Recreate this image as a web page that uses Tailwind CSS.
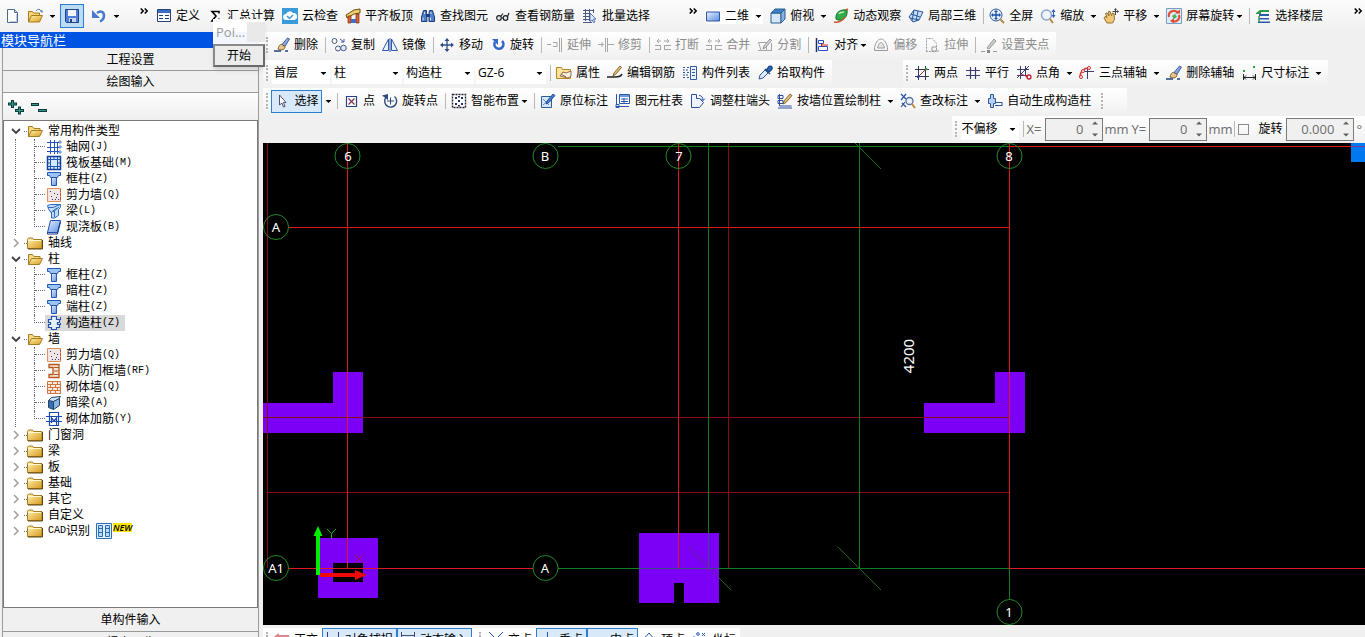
<!DOCTYPE html>
<html lang="zh-CN">
<head>
<meta charset="utf-8">
<title>绘图输入</title>
<script src="https://cdn.jsdelivr.net/npm/@tailwindcss/browser@4"></script>
</head>
<body class="h-screen overflow-hidden bg-[#f0f0f0] font-['Open_Sans','Noto_Sans_CJK_SC',sans-serif] text-xs leading-4 text-black">

<svg class="absolute size-0" aria-hidden="true">
  <defs>
    <linearGradient id="gBlue" x1="0" y1="0" x2="1" y2="1"><stop offset="0" stop-color="#e6f0ff"/><stop offset="1" stop-color="#5b8fe0"/></linearGradient>
    <linearGradient id="gGold" x1="0" y1="0" x2="1" y2="1"><stop offset="0" stop-color="#fff3b0"/><stop offset="1" stop-color="#d99a1c"/></linearGradient>
  </defs>
  <symbol id="ar" viewBox="0 0 12 16"><path d="M6.500 7h6l-3 3z"/></symbol>
  <symbol id="ars" viewBox="0 0 8 16"><path d="M2.500 7h6l-3 3z"/></symbol>
  <symbol id="more" viewBox="0 0 9 6"><path d="M.7.5l2.500 2.500-2.500 2.500M4.700.5l2.500 2.500-2.500 2.500" fill="none" stroke="#000" stroke-width="1.500"/></symbol>
  <symbol id="new" viewBox="0 0 16 16"><path d="M3.500 1.500h7l3 3v10h-10z" fill="#fff" stroke="#4a6a94"/><path d="M10.500 1.500v3h3" fill="#cfe0f5" stroke="#4a6a94"/><path d="M12.500 6v7.500H6" fill="none" stroke="#b5cbe8"/></symbol>
  <symbol id="open" viewBox="0 0 16 16"><path d="M1.500 14V3.500h4l1 1.500h6v3" fill="#f8d778" stroke="#a97a1a"/><path d="M1.500 14l3-6.500h11L12.500 14z" fill="url(#gGold)" stroke="#a97a1a"/><path d="M9 3c2-2.500 4-2 5 0" fill="none" stroke="#3f68b5"/><path d="M12.500 2.500h3V5z" fill="#3f68b5"/></symbol>
  <symbol id="save" viewBox="0 0 16 16"><path d="M1.500 1.500h13v13h-12l-1-1z" fill="#4f7fd6" stroke="#20418c"/><path d="M4 2h8v6H4z" fill="#f2f6ff"/><path d="M5 10h7v4H5z" fill="#c9d5ea"/><path d="M6 11h2v3H6z" fill="#20418c"/></symbol>
  <symbol id="undo" viewBox="0 0 16 16"><path d="M6 5c4-3 7-1 7 2.500 0 3-2 5-4 6" fill="none" stroke="#4a78d0" stroke-width="2.500"/><path d="M1 2v8h8z" fill="#4a78d0"/></symbol>
  <symbol id="define" viewBox="0 0 16 16"><path d="M1.500 1.500h13v12h-13z" fill="#fff" stroke="#25417c"/><path d="M2 2h12v3H2z" fill="#3d6fc9"/><path d="M3 7.500h4M9 7.500h4M3 10.500h4M9 10.500h4" stroke="#25417c"/></symbol>
  <symbol id="sum" viewBox="0 0 16 16"><path d="M12 5.500V3.500H5L9 8l-4 5h7v-2.500" fill="none" stroke="#000" stroke-width="1.600"/></symbol>
  <symbol id="cloud" viewBox="0 0 16 16"><path d="M0 0h16v16H0z" fill="#3b9bd8"/><path d="M4 12a3 3 0 010-6 4 4 0 017-1 3.500 3.500 0 011 7z" fill="#fff"/><path d="M5 8l2.500 2.500L11 7" fill="none" stroke="#3b9bd8" stroke-width="1.500"/></symbol>
  <symbol id="roof" viewBox="0 0 16 16"><path d="M1 7l8-5 6-1v4l-6 1-7 4z" fill="#f0cf6a" stroke="#6b4b12"/><path d="M3 8h3v7H3zM11 6h3v9h-3z" fill="#e0622c" stroke="#7a2a10" stroke-width=".7"/><path d="M6 11h5v4H6z" fill="#3d6fc9"/></symbol>
  <symbol id="bino" viewBox="0 0 16 16"><path d="M3.500 2.500h3v3l.5 8H1.500V9zM9.500 2.500h3l2 6.500v4.500H9V5.500z" fill="#4f7fc8" stroke="#1d3a78"/><path d="M6.500 6h3v3h-3z" fill="#1d3a78"/><path d="M3 9.500v3M10.500 9.500v3M4.500 4v2M11 4v2" stroke="#cfe0ff"/></symbol>
  <symbol id="glass" viewBox="0 0 16 16"><circle cx="4" cy="10" r="2.300" fill="#dfe8f5" stroke="#222" stroke-width="1.200"/><circle cx="10.500" cy="10" r="2.300" fill="#dfe8f5" stroke="#222" stroke-width="1.200"/><path d="M6.500 10h2M6 8l2-2.500M12.500 8.500L14 5" stroke="#222" fill="none" stroke-width="1.200"/></symbol>
  <symbol id="batch" viewBox="0 0 16 16"><path d="M1 2.500h10M1 5.500h8M1 8.500h6M1 11.500h6M3.500 1v12M7.500 1v12M11.500 1v4M1 14.500h9" stroke="#4a5a7a" fill="none"/><path d="M8 5l6 6-2.500.3L13 14l-1.500.6-1.200-2.600L8 13.500z" fill="#dbe8ff" stroke="#3a5fa8" stroke-width=".8"/></symbol>
  <symbol id="rect" viewBox="0 0 16 16"><path d="M1.500 4h13v9h-13z" fill="url(#gBlue)" stroke="#2f55a5"/></symbol>
  <symbol id="cube" viewBox="0 0 16 16"><path d="M1 5h10v10H1z" fill="#d5e6f8" stroke="#2d5c8f"/><path d="M1 5l4-4h10l-4 4z" fill="#3b82c8" stroke="#2d5c8f"/><path d="M11 5l4-4v10l-4 4z" fill="#86b4e0" stroke="#2d5c8f"/></symbol>
  <symbol id="orbit" viewBox="0 0 16 16"><path d="M3 11C2 4 8 1 14 2c1 6-3 11-9 10z" fill="#2faa4a" stroke="#127030"/><path d="M1 14c4 1 9-1 11-5M13 2l2-1" fill="none" stroke="#d0572a" stroke-width="1.500"/><path d="M6 6c1-2 3-2 5-2" stroke="#b8f0a0" fill="none" stroke-width="1.500"/></symbol>
  <symbol id="part3d" viewBox="0 0 16 16"><path d="M1 9l5-7 9 2-4 8-6 2z" fill="#c8dcf5" stroke="#2a5a9c"/><path d="M3 6l9 3M6 2L4 13M10 3L8 13M2 10l9 2" fill="none" stroke="#2a5a9c"/></symbol>
  <symbol id="full" viewBox="0 0 16 16"><circle cx="7" cy="7" r="6" fill="#e3eefc" stroke="#2e5a9e"/><path d="M7 3v8M3 7h8" stroke="#1d4f9f" stroke-width="1.300"/><path d="M7 2l2 2H5zM7 12l2-2H5zM2 7l2-2v4zM12 7l-2-2v4z" fill="#1d4f9f"/><path d="M11.500 11.500l3.500 3.500" stroke="#b98a3a" stroke-width="2"/></symbol>
  <symbol id="zoom" viewBox="0 0 16 16"><circle cx="6.500" cy="7" r="5" fill="#eef5ff" stroke="#8fa8cc" stroke-width="1.500"/><path d="M10 11l3 4" stroke="#b98a3a" stroke-width="2"/><path d="M11.500 4h4l-2-3zM11.500 7h4l-2 3z" fill="#2e5fae"/><path d="M13.500 3v5" stroke="#2e5fae"/></symbol>
  <symbol id="pan" viewBox="0 0 16 16"><path d="M4 15l-3-5 1-1.500 2 1L2.500 5.500 4 4.800 6 8 5.500 3.500 7 3.300 8.500 7.500 9.500 5l1.500.5.500 6-2 3.500z" fill="#efc777" stroke="#8a6420" stroke-width=".9"/><path d="M12.500 1v6M9.500 3.500h6" stroke="#444"/><path d="M12.500 0l1.500 2h-3zM16 3.500L14 2v3z" fill="#444"/></symbol>
  <symbol id="scrrot" viewBox="0 0 16 16"><path d="M.5.5h15v15H.5z" fill="#d9eaf9" stroke="#7a9cc4"/><path d="M3 9a5 5 0 019-4" fill="none" stroke="#e04a2a" stroke-width="2"/><path d="M13 7a5 5 0 01-7 6" fill="none" stroke="#e04a2a" stroke-width="2"/><path d="M9 5.500h5v-4zM8 10v5l-4-2z" fill="#e04a2a"/><path d="M6 8l3-2 2 3-3 2z" fill="#49b060"/></symbol>
  <symbol id="floor" viewBox="0 0 16 16"><path d="M1 5l4-3h9v2H6v2H1z" fill="#2c9a4b"/><path d="M4 6h10v2H4zM4 10h10v1.500H4zM3 13.500h12V15H3z" fill="#2b5aa8"/><path d="M4 8v6" stroke="#2c9a4b" stroke-width="1.500"/></symbol>
  <symbol id="brush" viewBox="0 0 16 16"><path d="M8 7.500L13.500 1l2 1-4.500 7.500z" fill="#8aa6e0" stroke="#2d4688" stroke-width=".8"/><path d="M4 12c1-4 2.500-5 4-4.500l3 2c0 3-3 4.500-7 2.500z" fill="#e8c48a" stroke="#5c4420" stroke-width=".8"/><path d="M0 14h7M11 14h3" stroke="#25417c" stroke-width="1.300"/></symbol>
  <symbol id="copy" viewBox="0 0 16 16"><circle cx="3.500" cy="4" r="2.500" fill="none" stroke="#445a80"/><circle cx="7" cy="11.500" r="2.500" fill="none" stroke="#445a80"/><circle cx="12.500" cy="11" r="2.800" fill="#dde8f8" stroke="#445a80"/><path d="M9 2l4 3M13 2v3h-3" fill="none" stroke="#3a62a8"/></symbol>
  <symbol id="mirror" viewBox="0 0 16 16"><path d="M6.500 2v11.500h-6zM9.500 2v11.500h6z" fill="#eaf2ff" stroke="#2e58a8"/><path d="M8 1v14" stroke="#2e58a8"/></symbol>
  <symbol id="move" viewBox="0 0 16 16"><path d="M8 2v12M2 8h12" stroke="#2f4f86" stroke-width="1.300"/><path d="M8 1l2.500 3h-5zM8 15l2.500-3h-5zM1 8l3-2.500v5zM15 8l-3-2.500v5z" fill="#2f4f86"/></symbol>
  <symbol id="rot" viewBox="0 0 16 16"><path d="M5 5a4.500 4.500 0 107-1" fill="none" stroke="#3468c8" stroke-width="2.600"/><path d="M2 2h6v6z" fill="#3468c8"/></symbol>
  <symbol id="ext" viewBox="0 0 16 16"><path d="M0 7.500h4M6 5.500h4v4H6M12.500 1v14M14.500 1v14" fill="none" stroke="#a6a6a6"/></symbol>
  <symbol id="trim" viewBox="0 0 16 16"><path d="M0 7.500h6M10 7.500h6M7.500 1v14M9.500 1v14M4 5v5" fill="none" stroke="#a6a6a6"/></symbol>
  <symbol id="brk" viewBox="0 0 16 16"><path d="M0 8.500h6M9 8.500h7M0 12.500h6M9 12.500h7M5.500 8v5M9.500 8v5M2 4h4M9 4h4M4 2L2 4l2 2M12 2l2 2-2 2" fill="none" stroke="#a6a6a6"/></symbol>
  <symbol id="split" viewBox="0 0 16 16"><path d="M1 13.500h14M1.500 5.500h8v8M14.500 6v8M1.500 5.500L4 13" fill="none" stroke="#a6a6a6"/><path d="M6 12l1-3 6-7 1.500 1.500-6 7z" fill="#ddd" stroke="#8e8e8e"/></symbol>
  <symbol id="align" viewBox="0 0 16 16"><path d="M2.500 1v14" stroke="#1b2b66" stroke-width="1.500"/><path d="M4.500 3.500h5v3h-5z" fill="#fff" stroke="#2450c0"/><path d="M4.500 9.500h9v4h-9z" fill="#fff" stroke="#2450c0"/><path d="M14 8H7l2-2M7 8l2 2" stroke="#d02020" fill="none"/></symbol>
  <symbol id="off" viewBox="0 0 16 16"><path d="M1.500 13.500v-3C3 4 6 2 8 2s5 2 6.500 8.500v3z" fill="none" stroke="#9a9a9a"/><path d="M4.500 11c1-4 2-5.500 3.500-5.500S10.500 7 11.500 11z" fill="#e4e4e4" stroke="#9a9a9a"/></symbol>
  <symbol id="stretch" viewBox="0 0 16 16"><path d="M2.500 14.500v-13h6l4 5v8z" fill="none" stroke="#9a9a9a" stroke-dasharray="2 1"/><path d="M8 10h5M8 10v4h7" fill="none" stroke="#9a9a9a"/></symbol>
  <symbol id="clip" viewBox="0 0 16 16"><path d="M0 14.500h4M12 14.500h4" stroke="#9a9a9a"/><path d="M6 11l7-9 2 2-7 8z" fill="#ccc" stroke="#999"/><path d="M6 13h3v3H6z" fill="#888"/></symbol>
  <symbol id="prop" viewBox="0 0 16 16"><path d="M.5 13.500v-11h5l1 2h8v9z" fill="#fbe39c" stroke="#b8862a"/><path d="M4 11l3-4 3 1 5-2v5l-3 2z" fill="#f5f0e6" stroke="#8a5a30" stroke-width=".9"/><path d="M5 9l5 3" stroke="#8a5a30"/></symbol>
  <symbol id="editbar" viewBox="0 0 16 16"><path d="M0 12h8c3 0 6 0 7-3" fill="none" stroke="#222" stroke-width="1.600"/><path d="M6 11l1-3 6-7 1.500 1.500-6 7z" fill="#e6c074" stroke="#6b4a1a" stroke-width=".8"/></symbol>
  <symbol id="list" viewBox="0 0 16 16"><path d="M8.500 1.500h6v13h-6z" fill="#eef4ff" stroke="#2e5a9e"/><path d="M10 4.500h3M10 7.500h3M10 10.500h3" stroke="#2e5a9e"/><path d="M1 2.500h2M5 2.500h2M1 7.500h2M5 7.500h2M1 12.500h2M5 12.500h2M1 5h6M1 10h6" stroke="#2e5a9e" stroke-dasharray="2 1"/></symbol>
  <symbol id="pick" viewBox="0 0 16 16"><path d="M2 14l1-4 5-5 3 3-5 5z" fill="#dbeafc" stroke="#2e5a9e"/><path d="M8 4l5 5M9.500 5L12 1.500c2-1 4 1 2.500 3L12 7z" fill="#2d6cb8" stroke="#1c4a88" stroke-width="1.500"/></symbol>
  <symbol id="two" viewBox="0 0 16 16"><path d="M1 4.500h14M1 11.500h14M4.500 1v14M11.500 1v14" stroke="#333a50" fill="none"/><path d="M3 13L13 3" stroke="#b02030"/><circle cx="4.500" cy="11.500" r="1.300" fill="#2450c0"/><circle cx="12" cy="4" r="1.300" fill="#3b9a40"/></symbol>
  <symbol id="para" viewBox="0 0 16 16"><path d="M1 5.500h14M1 10.500h14M5.500 2v12M10.500 2v12" stroke="#3a3f70" stroke-width="1.200" fill="none"/></symbol>
  <symbol id="angle" viewBox="0 0 16 16"><path d="M1 4.500h12M1 10.500h10M4.500 1v13M9.500 1v9M1 13L13 1" stroke="#3a3f70" fill="none"/><path d="M5 9l7 3" stroke="#c02030"/><circle cx="13" cy="12" r="2" fill="none" stroke="#c02030" stroke-width="1.300"/></symbol>
  <symbol id="three" viewBox="0 0 16 16"><path d="M1 12c0-6 4-9 9-9" fill="none" stroke="#d03030" stroke-width="1.300"/><path d="M4 6.500h11M8.500 2v12" stroke="#3a3f70"/><circle cx="2" cy="12" r="1.500" fill="#fff" stroke="#d03030"/><circle cx="4" cy="6" r="1.500" fill="#fff" stroke="#d03030"/><circle cx="10" cy="3" r="1.500" fill="#fff" stroke="#d03030"/></symbol>
  <symbol id="dim" viewBox="0 0 16 16"><path d="M2 5h2v2H2zM12 1h2v2h-2z" fill="#35a040"/><path d="M2.500 9v6M14.500 9v6M3 12.500h11M5 10.500l-2 2 2 2M12 10.500l2 2-2 2" stroke="#222" fill="none"/></symbol>
  <symbol id="ptr" viewBox="0 0 16 16"><path d="M5.500 2v10l2.500-2 1.500 4 1.500-.6L9.500 9.500H12z" fill="#fff" stroke="#3a3f60" stroke-width=".9"/></symbol>
  <symbol id="pt" viewBox="0 0 16 16"><path d="M3.500 3.500h10v10h-10z" fill="#fff" stroke="#25418c" stroke-width="1.200"/><path d="M5.500 5.500l6 6M11.500 5.500l-6 6" stroke="#7a3050" stroke-width="1.200"/></symbol>
  <symbol id="rotpt" viewBox="0 0 16 16"><path d="M3.500 5a6 6 0 109-1.500" fill="none" stroke="#2e4a7e" stroke-width="1.400"/><path d="M0 2.500L6 1v6z" fill="#2e4a7e"/><path d="M8.500 4.500v7M5 8h7" stroke="#2e4a7e"/></symbol>
  <symbol id="smart" viewBox="0 0 16 16"><path d="M1.500 1.500h13v13h-13z" fill="#fff" stroke="#223" stroke-dasharray="2 1" stroke-width="1.400"/><path d="M4 4h2v2H4zM10 4h2v2h-2zM4 10h2v2H4zM10 10h2v2h-2zM7 7h2v2H7zM7 3h2v1.500H7zM7 12h2v1.500H7z" fill="#1f3560"/></symbol>
  <symbol id="orig" viewBox="0 0 16 16"><path d="M1.500 3.500h10v11h-10z" fill="#d7e6fa" stroke="#2e5a9e"/><path d="M3 12l8-7M3 6l6 6" stroke="#5b86c8"/><path d="M6 11l1-3 6-7 2 1.500-6 7z" fill="#3f7fd0" stroke="#1c3f80" stroke-width=".8"/></symbol>
  <symbol id="coltab" viewBox="0 0 16 16"><path d="M4.500 1.500h10v9h-10z" fill="#fff" stroke="#2e58b0"/><path d="M5 2h9v2H5z" fill="#6b97dc"/><path d="M6 6h7M6 8.500h7M9 5v5" stroke="#2e58b0"/><path d="M1.500 1v10M1 13.500h13M1 11.500h3v3H1z" fill="none" stroke="#2e58b0"/></symbol>
  <symbol id="adj" viewBox="0 0 16 16"><path d="M1.500 1.500h5v4h3l4 4-4 5h-8z" fill="#eef4ff" stroke="#2e4fa0"/><path d="M9 2.500c3 0 4 2 4 5M11 5.500l2 2 2-2" fill="none" stroke="#2e4fa0"/></symbol>
  <symbol id="wallcol" viewBox="0 0 16 16"><path d="M1 2.500h5v3H1zM1 7.500h5v3H1zM2.500 1v12h12M1 15h14" fill="none" stroke="#2e4fa0"/><path d="M6 11l1-3 6-7 2 1.500-6 7z" fill="#e6c074" stroke="#6b4a1a" stroke-width=".8"/></symbol>
  <symbol id="chk" viewBox="0 0 16 16"><path d="M1 1l5 5M6 1L1 7M1 14l4-5M2 10l4 4" stroke="#2450a8" stroke-width="1.200"/><circle cx="9.500" cy="8" r="3.500" fill="#e8f2ff" stroke="#55719c" stroke-width="1.300"/><path d="M12 11l3 4" stroke="#c08a3a" stroke-width="2"/></symbol>
  <symbol id="auto" viewBox="0 0 16 16"><path d="M3.500 1.500h3v4h2v5h-2v4h-3v-4h-2v-5h2z" fill="#b9d2f3" stroke="#2e58a0"/><path d="M8 9.500h7M8 12.500h7M15 9v4" stroke="#2e58a0" fill="none"/></symbol>
  <symbol id="fo" viewBox="0 0 16 16"><path d="M1.500 13.500v-10h4l1.500 2h6v2" fill="#f7da80" stroke="#a47c22"/><path d="M1.500 13.500l3-6h11l-3 6z" fill="url(#gGold)" stroke="#a47c22"/></symbol>
  <symbol id="fc" viewBox="0 0 16 16"><path d="M.5 13.500v-9l1-1.500h4l1 1.500h8.500v9z" fill="url(#gGold)" stroke="#a47c22"/><path d="M1 5.500h13" stroke="#fff7cf"/><path d="M1 14h14.500V5" fill="none" stroke="#5c4715"/></symbol>
  <symbol id="dn" viewBox="0 0 16 16"><path d="M4 6l4 4 4-4" fill="none" stroke="#404040" stroke-width="1.800"/></symbol>
  <symbol id="rt" viewBox="0 0 16 16"><path d="M6 4l4 4-4 4" fill="none" stroke="#a0a0a0" stroke-width="1.500"/></symbol>
  <symbol id="grid" viewBox="0 0 16 16"><path d="M1 3.500h12M1 8.500h12M1 12.500h12M4.500 1v14M8.500 1v14M11.500 3v12" stroke="#2456b8" fill="none"/><path d="M13 2h2v2h-2zM13 7h2v2h-2zM13 12h2v2h-2z" fill="#fff" stroke="#2456b8" stroke-width=".7"/></symbol>
  <symbol id="raft" viewBox="0 0 16 16"><path d="M1.500 1.500h13v13h-13z" fill="#d9e9fc" stroke="#123f98" stroke-width="1.500"/><path d="M4.500 4.500h7v7h-7zM4.500 2v12M11.500 2v12M2 4.500h12M2 11.500h12M8 2v2M8 12v2M2 8h2M12 8h2" fill="none" stroke="#1c56b8"/></symbol>
  <symbol id="col" viewBox="0 0 16 16"><path d="M1.500 1.500h13v3h-2l-1 2h-7l-1-2h-2z" fill="#9cc3f5" stroke="#2257b5"/><path d="M5.500 6.500h5v8h-5z" fill="url(#gBlue)" stroke="#2257b5"/></symbol>
  <symbol id="shear" viewBox="0 0 16 16"><path d="M1.500 1.500h13v13h-13z" fill="#f0e6e2" stroke="#e0905a"/><path d="M4 4h1v1H4zM8 6h1v1H8zM5 9h1v1H5zM10 10h1v1h-1zM6 12h1v1H6zM11 7h1v1h-1zM9 12h1v1H9zM12 12h1v1h-1z" fill="#333a80"/><path d="M14.500 2v12" stroke="#c05a20" stroke-dasharray="3 1"/></symbol>
  <symbol id="beam" viewBox="0 0 16 16"><path d="M1.500 2.500l3-1h10v3l-2 2v6l-4 2.500h-3v-5l-3-4z" fill="#c4dcf9" stroke="#2b6ac0"/><path d="M2 4.500h5l7-3M7 9l6-5M5.500 15V9L11 5M8.500 14V8" fill="none" stroke="#2b6ac0"/></symbol>
  <symbol id="slab" viewBox="0 0 16 16"><path d="M4.500 1.500h10l-3 12h-10z" fill="url(#gBlue)" stroke="#1f4fb0"/><path d="M1.500 13.500v1.500h10l3-12" fill="none" stroke="#12347c"/></symbol>
  <symbol id="gz" viewBox="0 0 16 16"><path d="M5.500 1.500h5v3h3v3h-2v2h2v3h-3v2h-5v-2h-3v-3h2v-2h-2v-3h3z" fill="#e4eefc" stroke="#2450b0" stroke-width="1.200"/><path d="M14.500 2v3M14.500 8v2" stroke="#2450b0"/></symbol>
  <symbol id="rf" viewBox="0 0 16 16"><path d="M3 1.500h10v13H3v-3h4v-7H3z" fill="#fbe6d4" stroke="#b5561c" stroke-width="1.300"/><path d="M8 4.500h5M8 8h4M8 11.500h5" stroke="#b5561c"/></symbol>
  <symbol id="brick" viewBox="0 0 16 16"><path d="M1.500 2.500h13v12h-13z" fill="#fdeadb" stroke="#cf7440"/><path d="M2 5.500h12M2 8.500h12M2 11.500h12M6.500 3v3M11.500 3v3M4.500 6v3M9.500 6v3M6.500 9v3M11.500 9v3M4.500 12v2M9.500 12v2" stroke="#cf7440"/></symbol>
  <symbol id="hbeam" viewBox="0 0 16 16"><path d="M2.500 5.500l5 1v8l-5-2z" fill="#3a6fae" stroke="#22466f"/><path d="M2.500 5.500l3-3 9-1-2 3-5 2z" fill="#cfe0f2" stroke="#22466f"/><path d="M7.500 6.500l6-3v7l-6 4z" fill="#8db4dc" stroke="#22466f"/></symbol>
  <symbol id="rebar" viewBox="0 0 16 16"><path d="M3.500 5.500v-4h9v13h-9v-9M0 5.500h16M0 10.500h16M5.500 12V7l2.500 3 2.500-3v7" fill="none" stroke="#1c49b0" stroke-width="1.200"/></symbol>
  <symbol id="cad" viewBox="0 0 16 16"><path d="M.5.5h15v15H.5z" fill="#e8f3ff" stroke="#2a6db8"/><path d="M2.500 2.500h4v11h-4zM9.500 2.500h4v11h-4z" fill="#b9dafa" stroke="#2a6db8"/><path d="M3 5.500h3M3 9.500h3M10 5.500h3M10 9.500h3" stroke="#2a6db8"/></symbol>
</svg>

<div class="flex h-full flex-col">
  <header class="flex h-[31px] shrink-0 items-center whitespace-nowrap bg-linear-to-b from-[#fcfcfc] to-[#f0f0f0] pl-1 [&>button]:mr-[7px] [&>button]:flex [&>button]:shrink-0 [&>button]:items-center">
    <button aria-label="新建"><svg class="size-4"><use href="#new"/></svg></button>
    <button aria-label="打开"><svg class="size-4"><use href="#open"/></svg><svg class="h-4 w-3"><use href="#ar"/></svg></button>
    <button aria-label="保存" class="-ml-0.5 h-6 w-6 justify-center border border-[#2a7fd0] bg-[#bcdcf4]"><svg class="size-4"><use href="#save"/></svg></button>
    <button aria-label="撤销"><svg class="size-4"><use href="#undo"/></svg><svg class="h-4 w-3"><use href="#ar"/></svg></button>
    <button aria-label="更多" class="ml-3.5 self-start pt-2"><svg class="h-1.5 w-[9px]"><use href="#more"/></svg></button>
    <button><svg class="mr-1 size-4"><use href="#define"/></svg>定义</button>
    <button><svg class="mr-1 size-4"><use href="#sum"/></svg>汇总计算</button>
    <button><svg class="mr-1 size-4"><use href="#cloud"/></svg>云检查</button>
    <button><svg class="mr-1 size-4"><use href="#roof"/></svg>平齐板顶</button>
    <button><svg class="mr-1 size-4"><use href="#bino"/></svg>查找图元</button>
    <button><svg class="mr-1 size-4"><use href="#glass"/></svg>查看钢筋量</button>
    <button><svg class="mr-1 size-4"><use href="#batch"/></svg>批量选择</button>
    <button aria-label="更多" class="ml-8 self-start pt-2"><svg class="h-1.5 w-[9px]"><use href="#more"/></svg></button>
    <button class="bg-white"><svg class="mr-1 size-4"><use href="#rect"/></svg>二维<svg class="mr-0.5 h-4 w-3"><use href="#ar"/></svg></button>
    <button><svg class="mr-1 size-4"><use href="#cube"/></svg>俯视<svg class="h-4 w-3"><use href="#ar"/></svg></button>
    <button><svg class="mr-1 size-4"><use href="#orbit"/></svg>动态观察</button>
    <button><svg class="mr-1 size-4"><use href="#part3d"/></svg>局部三维</button>
    <span class="mr-[5px] h-4 w-px shrink-0 bg-[#b8b8b8]"></span>
    <button><svg class="mr-1 size-4"><use href="#full"/></svg>全屏</button>
    <button><svg class="mr-1 size-4"><use href="#zoom"/></svg>缩放<svg class="h-4 w-3"><use href="#ar"/></svg></button>
    <button><svg class="mr-1 size-4"><use href="#pan"/></svg>平移<svg class="h-4 w-3"><use href="#ar"/></svg></button>
    <button><svg class="mr-1 size-4"><use href="#scrrot"/></svg>屏幕旋转<svg class="h-4 w-2"><use href="#ars"/></svg></button>
    <span class="mr-[5px] h-4 w-px shrink-0 bg-[#b8b8b8]"></span>
    <button><svg class="mr-1 size-4"><use href="#floor"/></svg>选择楼层</button>
    <div class="ml-auto mr-0.5 self-start pt-2"><button aria-label="更多" class="block"><svg class="h-1.5 w-[9px]"><use href="#more"/></svg></button></div>
  </header>

  <div class="flex min-h-0 flex-1">
    <aside class="mr-1 mt-px flex w-[259px] shrink-0 flex-col bg-[#f0f0f0]">
      <h1 class="h-4 shrink-0 overflow-hidden bg-[#0054e3] pl-px text-[13px] leading-4 text-white">模块导航栏</h1>
      <div class="ml-0.5 flex min-h-0 flex-1 flex-col border-x border-[#9a9a9a]">
        <button class="h-[23px] shrink-0 border-b border-[#9a9a9a] pt-0.5">工程设置</button>
        <button class="h-[22px] shrink-0 border-b border-[#9a9a9a]">绘图输入</button>
        <div class="flex h-[27px] shrink-0 items-center gap-1 bg-linear-to-b from-[#fdfdfd] to-[#efefef] pl-1">
          <button aria-label="全部展开"><svg class="h-5 w-5" viewBox="0 0 20 20"><path d="M1 7h9M5.500 3v8M8 13.500h9M12.500 9.500v8" stroke="#0d3b3b" stroke-width="3"/><path d="M2 7h7M5.500 4v6M9 13.500h7M12.500 10.500v6" stroke="#2f9a8a"/></svg></button>
          <button aria-label="全部折叠"><svg class="h-5 w-5" viewBox="0 0 20 20"><path d="M0 7.500h8M7 13.500h9" stroke="#0d3b3b" stroke-width="3"/><path d="M1 7.500h6M8 13.500h7" stroke="#2f9a8a"/></svg></button>
        </div>
        <nav class="min-h-0 flex-1 overflow-hidden border border-[#7a7a7a] bg-white pl-1 pt-0.5 leading-4 [&_b]:font-['Liberation_Mono',monospace] [&_b]:text-[10px] [&_b]:font-normal [&>button]:flex [&>button]:h-4 [&>button]:items-center [&>ul]:ml-[7px] [&>ul]:border-l [&>ul]:border-dotted [&>ul]:border-gray-500 [&>ul]:pl-[18px] [&_li]:flex [&_li]:h-4 [&_li]:items-center [&_li]:border-l [&_li]:border-dotted [&_li]:border-gray-500 [&_li:last-child]:border-l-transparent [&_li]:before:h-2 [&_li]:before:w-[10px] [&_li]:before:self-start [&_li]:before:border-b [&_li]:before:border-dotted [&_li]:before:border-gray-500 [&_li:last-child]:before:-ml-px [&_li:last-child]:before:w-[11px] [&_li:last-child]:before:border-l [&_li>button]:flex [&_li>button]:h-4 [&_li>button]:items-center [&_li>button]:px-px">
          <button><svg class="size-4"><use href="#dn"/></svg><span class="w-[3px] border-b border-dotted border-gray-500"></span><svg class="mr-[5px] size-4"><use href="#fo"/></svg>常用构件类型</button>
          <ul>
            <li><button><svg class="mr-1 size-4"><use href="#grid"/></svg>轴网<b>(J)</b></button></li>
            <li><button><svg class="mr-1 size-4"><use href="#raft"/></svg>筏板基础<b>(M)</b></button></li>
            <li><button><svg class="mr-1 size-4"><use href="#col"/></svg>框柱<b>(Z)</b></button></li>
            <li><button><svg class="mr-1 size-4"><use href="#shear"/></svg>剪力墙<b>(Q)</b></button></li>
            <li><button><svg class="mr-1 size-4"><use href="#beam"/></svg>梁<b>(L)</b></button></li>
            <li><button><svg class="mr-1 size-4"><use href="#slab"/></svg>现浇板<b>(B)</b></button></li>
          </ul>
          <button><svg class="size-4"><use href="#rt"/></svg><span class="w-[3px] border-b border-dotted border-gray-500"></span><svg class="mr-[5px] size-4"><use href="#fc"/></svg>轴线</button>
          <button><svg class="size-4"><use href="#dn"/></svg><span class="w-[3px] border-b border-dotted border-gray-500"></span><svg class="mr-[5px] size-4"><use href="#fo"/></svg>柱</button>
          <ul>
            <li><button><svg class="mr-1 size-4"><use href="#col"/></svg>框柱<b>(Z)</b></button></li>
            <li><button><svg class="mr-1 size-4"><use href="#col"/></svg>暗柱<b>(Z)</b></button></li>
            <li><button><svg class="mr-1 size-4"><use href="#col"/></svg>端柱<b>(Z)</b></button></li>
            <li><button class="bg-[#d9d9d9]"><svg class="mr-1 size-4"><use href="#gz"/></svg>构造柱<b class="pr-1">(Z)</b></button></li>
          </ul>
          <button><svg class="size-4"><use href="#dn"/></svg><span class="w-[3px] border-b border-dotted border-gray-500"></span><svg class="mr-[5px] size-4"><use href="#fo"/></svg>墙</button>
          <ul>
            <li><button><svg class="mr-1 size-4"><use href="#shear"/></svg>剪力墙<b>(Q)</b></button></li>
            <li><button><svg class="mr-1 size-4"><use href="#rf"/></svg>人防门框墙<b>(RF)</b></button></li>
            <li><button><svg class="mr-1 size-4"><use href="#brick"/></svg>砌体墙<b>(Q)</b></button></li>
            <li><button><svg class="mr-1 size-4"><use href="#hbeam"/></svg>暗梁<b>(A)</b></button></li>
            <li><button><svg class="mr-1 size-4"><use href="#rebar"/></svg>砌体加筋<b>(Y)</b></button></li>
          </ul>
          <button><svg class="size-4"><use href="#rt"/></svg><span class="w-[3px] border-b border-dotted border-gray-500"></span><svg class="mr-[5px] size-4"><use href="#fc"/></svg>门窗洞</button>
          <button><svg class="size-4"><use href="#rt"/></svg><span class="w-[3px] border-b border-dotted border-gray-500"></span><svg class="mr-[5px] size-4"><use href="#fc"/></svg>梁</button>
          <button><svg class="size-4"><use href="#rt"/></svg><span class="w-[3px] border-b border-dotted border-gray-500"></span><svg class="mr-[5px] size-4"><use href="#fc"/></svg>板</button>
          <button><svg class="size-4"><use href="#rt"/></svg><span class="w-[3px] border-b border-dotted border-gray-500"></span><svg class="mr-[5px] size-4"><use href="#fc"/></svg>基础</button>
          <button><svg class="size-4"><use href="#rt"/></svg><span class="w-[3px] border-b border-dotted border-gray-500"></span><svg class="mr-[5px] size-4"><use href="#fc"/></svg>其它</button>
          <button><svg class="size-4"><use href="#rt"/></svg><span class="w-[3px] border-b border-dotted border-gray-500"></span><svg class="mr-[5px] size-4"><use href="#fc"/></svg>自定义</button>
          <button><svg class="size-4"><use href="#rt"/></svg><span class="w-[3px] border-b border-dotted border-gray-500"></span><svg class="mr-[5px] size-4"><use href="#fc"/></svg><b>CAD</b>识别<svg class="ml-1.5 mr-px size-4"><use href="#cad"/></svg><span class="self-start bg-[#ffe600] text-[9px] font-semibold italic leading-[9px]">NEW</span></button>
        </nav>
        <button class="h-6 shrink-0 border-b border-[#9a9a9a]">单构件输入</button>
        <button class="h-[5px] shrink-0 overflow-hidden leading-4"><span class="block pt-[3px]">报表预览</span></button>
      </div>
    </aside>

    <main class="flex min-w-0 flex-1 flex-col">
      <div class="flex h-7 shrink-0 items-center whitespace-nowrap">
        <div class="flex h-[26px] items-center bg-linear-to-b from-white to-[#f1f1f1] pl-[3px] [&>button]:mr-[7px] [&>button]:flex [&>button]:items-center">
          <span class="mr-[6px] h-4 border-l-2 border-dotted border-[#b5b5b5]"></span>
          <button><svg class="mr-1 size-4"><use href="#brush"/></svg>删除</button>
          <span class="mr-[5px] h-4 w-px bg-[#b8b8b8]"></span>
          <button><svg class="mr-1 size-4"><use href="#copy"/></svg>复制</button>
          <button><svg class="mr-1 size-4"><use href="#mirror"/></svg>镜像</button>
          <span class="mr-[5px] h-4 w-px bg-[#b8b8b8]"></span>
          <button><svg class="mr-1 size-4"><use href="#move"/></svg>移动</button>
          <button><svg class="mr-1 size-4"><use href="#rot"/></svg>旋转</button>
          <span class="mr-[5px] h-4 w-px bg-[#b8b8b8]"></span>
          <button disabled class="text-[#8c8c8c]"><svg class="mr-1 size-4"><use href="#ext"/></svg>延伸</button>
          <button disabled class="text-[#8c8c8c]"><svg class="mr-1 size-4"><use href="#trim"/></svg>修剪</button>
          <span class="mr-[5px] h-4 w-px bg-[#b8b8b8]"></span>
          <button disabled class="text-[#8c8c8c]"><svg class="mr-1 size-4"><use href="#brk"/></svg>打断</button>
          <button disabled class="text-[#8c8c8c]"><svg class="mr-1 size-4"><use href="#brk"/></svg>合并</button>
          <button disabled class="text-[#8c8c8c]"><svg class="mr-1 size-4"><use href="#split"/></svg>分割</button>
          <span class="mr-[5px] h-4 w-px bg-[#b8b8b8]"></span>
          <button><svg class="mr-1 size-4"><use href="#align"/></svg>对齐<svg class="h-4 w-2"><use href="#ars"/></svg></button>
          <button disabled class="text-[#8c8c8c]"><svg class="mr-1 size-4"><use href="#off"/></svg>偏移</button>
          <button disabled class="text-[#8c8c8c]"><svg class="mr-1 size-4"><use href="#stretch"/></svg>拉伸</button>
          <span class="mr-[5px] h-4 w-px bg-[#b8b8b8]"></span>
          <button disabled class="text-[#8c8c8c]"><svg class="mr-1 size-4"><use href="#clip"/></svg>设置夹点</button>
        </div>
      </div>

      <div class="flex h-7 shrink-0 items-center whitespace-nowrap">
        <div class="flex h-[26px] items-center bg-linear-to-b from-white to-[#f1f1f1] pl-[3px] [&>button]:mr-[7px] [&>button]:flex [&>button]:items-center">
          <span class="mr-1 h-4 border-l-2 border-dotted border-[#b5b5b5]"></span>
          <label class="mr-0.5 grid h-[22px] w-[58px] grid-cols-[1fr_12px] items-center bg-white"><select aria-label="楼层" class="col-span-2 col-start-1 row-start-1 appearance-none bg-transparent pl-0.5"><option>首层</option></select><svg class="pointer-events-none col-start-2 row-start-1 -ml-1 h-4 w-3"><use href="#ar"/></svg></label>
          <label class="mr-0.5 grid h-[22px] w-[70px] grid-cols-[1fr_12px] items-center bg-white"><select aria-label="构件分类" class="col-span-2 col-start-1 row-start-1 appearance-none bg-transparent pl-0.5"><option>柱</option></select><svg class="pointer-events-none col-start-2 row-start-1 -ml-1 h-4 w-3"><use href="#ar"/></svg></label>
          <label class="mr-0.5 grid h-[22px] w-[70px] grid-cols-[1fr_12px] items-center bg-white"><select aria-label="构件类型" class="col-span-2 col-start-1 row-start-1 appearance-none bg-transparent pl-0.5"><option>构造柱</option></select><svg class="pointer-events-none col-start-2 row-start-1 -ml-1 h-4 w-3"><use href="#ar"/></svg></label>
          <label class="mr-1 grid h-[22px] w-[70px] grid-cols-[1fr_12px] items-center bg-white"><select aria-label="构件" class="col-span-2 col-start-1 row-start-1 appearance-none bg-transparent pl-0.5"><option>GZ-6</option></select><svg class="pointer-events-none col-start-2 row-start-1 -ml-1 h-4 w-3"><use href="#ar"/></svg></label>
          <span class="mr-[5px] h-4 w-px bg-[#b8b8b8]"></span>
          <button><svg class="mr-1 size-4"><use href="#prop"/></svg>属性</button>
          <button><svg class="mr-1 size-4"><use href="#editbar"/></svg>编辑钢筋</button>
          <button><svg class="mr-1 size-4"><use href="#list"/></svg>构件列表</button>
          <button><svg class="mr-1 size-4"><use href="#pick"/></svg>拾取构件</button>
        </div>
        <div class="ml-[71px] flex h-[26px] items-center bg-linear-to-b from-white to-[#f1f1f1] pl-[3px] [&>button]:mr-[7px] [&>button]:flex [&>button]:items-center">
          <span class="mr-[6px] h-4 border-l-2 border-dotted border-[#b5b5b5]"></span>
          <button><svg class="mr-1 size-4"><use href="#two"/></svg>两点</button>
          <button><svg class="mr-1 size-4"><use href="#para"/></svg>平行</button>
          <button><svg class="mr-1 size-4"><use href="#angle"/></svg>点角<svg class="h-4 w-3"><use href="#ar"/></svg></button>
          <button><svg class="mr-1 size-4"><use href="#three"/></svg>三点辅轴<svg class="h-4 w-3"><use href="#ar"/></svg></button>
          <button><svg class="mr-1 size-4"><use href="#brush"/></svg>删除辅轴</button>
          <button><svg class="mr-1 size-4"><use href="#dim"/></svg>尺寸标注<svg class="h-4 w-3"><use href="#ar"/></svg></button>
        </div>
      </div>

      <div class="flex h-7 shrink-0 items-center whitespace-nowrap">
        <div class="flex h-[26px] items-center bg-linear-to-b from-white to-[#f1f1f1] pl-[3px] [&>button]:mr-[7px] [&>button]:flex [&>button]:items-center">
          <span class="mr-[3px] h-4 border-l-2 border-dotted border-[#b5b5b5]"></span>
          <button class="h-[23px] w-[51px] justify-center border border-[#2a7fd0] bg-[#d8eaf9]"><svg class="mr-1 size-4"><use href="#ptr"/></svg>选择</button>
          <button aria-label="选择方式" class="-ml-[7px]"><svg class="-ml-[3px] mr-px h-4 w-3"><use href="#ar"/></svg></button>
          <span class="-ml-0.5 mr-[5px] h-4 w-px bg-[#b8b8b8]"></span>
          <button><svg class="mr-1 size-4"><use href="#pt"/></svg>点</button>
          <button><svg class="mr-1 size-4"><use href="#rotpt"/></svg>旋转点</button>
          <span class="mr-[5px] h-4 w-px bg-[#b8b8b8]"></span>
          <button><svg class="mr-1 size-4"><use href="#smart"/></svg>智能布置<svg class="h-4 w-2"><use href="#ars"/></svg></button>
          <span class="mr-[5px] h-4 w-px bg-[#b8b8b8]"></span>
          <button><svg class="mr-1 size-4"><use href="#orig"/></svg>原位标注</button>
          <button><svg class="mr-1 size-4"><use href="#coltab"/></svg>图元柱表</button>
          <button><svg class="mr-1 size-4"><use href="#adj"/></svg>调整柱端头</button>
          <button><svg class="mr-1 size-4"><use href="#wallcol"/></svg>按墙位置绘制柱<svg class="h-4 w-3"><use href="#ar"/></svg></button>
          <button><svg class="mr-1 size-4"><use href="#chk"/></svg>查改标注<svg class="h-4 w-3"><use href="#ar"/></svg></button>
          <button><svg class="mr-1 size-4"><use href="#auto"/></svg>自动生成构造柱</button>
          <span class="ml-[3px] mr-6 h-4 border-l-2 border-dotted border-[#b5b5b5]"></span>
        </div>
      </div>

      <div class="flex h-7 shrink-0 items-center justify-end whitespace-nowrap">
        <div class="flex h-[26px] items-center bg-linear-to-b from-white to-[#f1f1f1] pl-[3px] pr-[3px] text-[13px] text-[#6d6d6d]">
          <span class="mr-1 h-4 border-l-2 border-dotted border-[#b5b5b5]"></span>
          <label class="mr-1 grid h-[22px] w-[58px] grid-cols-[1fr_12px] items-center bg-white text-xs text-black"><select aria-label="偏移方式" class="col-span-2 col-start-1 row-start-1 appearance-none bg-transparent"><option>不偏移</option></select><svg class="pointer-events-none col-start-2 row-start-1 -ml-1 h-4 w-3"><use href="#ar"/></svg></label>
          <span class="mr-0.5 h-4 w-px bg-[#b8b8b8]"></span>
          <label for="ox" class="w-[19px]">X=</label>
          <span class="flex h-[23px] w-[58px] items-center border border-[#7a7a7a] bg-[#f0f0f0] pr-[3px]"><input id="ox" value="0" disabled class="min-w-0 flex-1 pr-2 text-right"><svg class="h-5 w-2" viewBox="0 0 8 20" fill="#606060"><path d="M1 5.500h6L4 2.500zM1 14.500h6l-3 3z"/></svg></span>
          <span class="w-[28px] pl-px">mm</span>
          <label for="oy" class="w-[18px]">Y=</label>
          <span class="flex h-[23px] w-[58px] items-center border border-[#7a7a7a] bg-[#f0f0f0] pr-[3px]"><input id="oy" value="0" disabled class="min-w-0 flex-1 pr-2 text-right"><svg class="h-5 w-2" viewBox="0 0 8 20" fill="#606060"><path d="M1 5.500h6L4 2.500zM1 14.500h6l-3 3z"/></svg></span>
          <span class="w-[27px] pl-px">mm</span>
          <span class="mr-[3px] h-4 w-px bg-[#b8b8b8]"></span>
          <label class="mr-1 flex items-center text-xs text-black"><input type="checkbox" class="mr-[9px] size-[11px] appearance-none border border-[#8a8a8a]">旋转</label>
          <span class="flex h-[23px] w-[68px] items-center border border-[#7a7a7a] bg-[#f0f0f0] pr-[3px]"><input aria-label="旋转角度" value="0.000" disabled class="min-w-0 flex-1 pr-2 text-right"><svg class="h-5 w-2" viewBox="0 0 8 20" fill="#606060"><path d="M1 5.500h6L4 2.500zM1 14.500h6l-3 3z"/></svg></span>
          <span class="pl-0.5">°</span>
        </div>
      </div>

      <section aria-label="绘图区" class="relative min-h-0 flex-1 overflow-hidden bg-black">
        <svg class="block h-full w-full" fill="none">
          <!-- drawing coordinates are window coordinates; the group moves them to the canvas origin -->
          <g transform="translate(-263 -143)">
            <g fill="#7b00f5">
              <path d="M333 372h30v61H263v-30h70z"/>
              <path d="M995 372h30v61H924v-30h71z"/>
              <path fill-rule="evenodd" d="M318 538h60v60h-60zM333 563h30v19h-30z"/>
              <path d="M639 533h80v70h-35v-20h-10v20h-35z"/>
            </g>
            <g shape-rendering="crispEdges">
              <path stroke="#860c12" d="M267.500 143v425M728.500 143v425M263 417.500h746M267 492.500h742"/>
              <path stroke="#0c7d20" d="M708.500 143v425M859.500 143v425M558 146.500h451M558 568.500h451M1009.500 568v32"/>
              <path stroke="#dc1820" d="M347.500 143v425M678.500 143v425M1009.500 143v425M289 227.500h720M289 568.500h244M1009 568.500h3000M1009 146.500h3000"/>
              <path stroke="#3c4a80" d="M639 568.500h80M708.500 533v35"/>
            </g>
            <path stroke="#1f6a1f" d="M855 143l26 26M838 547l43 43M719 578l12 12"/>
            <path stroke="#5a2a9a" d="M688 547l31 31"/>
            <g stroke="#1f8a28">
              <circle cx="347.500" cy="156" r="12.500"/><circle cx="545.500" cy="156" r="12.500"/><circle cx="678.500" cy="156" r="12.500"/><circle cx="1009.500" cy="156" r="12.500"/>
              <circle cx="276" cy="227" r="12.500"/><circle cx="276" cy="568" r="12.500"/><circle cx="545.500" cy="568" r="12.500"/><circle cx="1009.500" cy="612" r="12.500"/>
            </g>
            <path fill="#00f000" d="M316 575v-39h-2.500l4.500-10 4.500 10H320v39z"/>
            <path fill="#f00808" d="M320 573h35v-3l12 5-12 5v-3h-35z"/>
            <path stroke="#18a818" d="M327 529l4.500 4.500 4.500-4.500M331.500 533.500v5"/>
            <path stroke="#b00060" d="M355 555l8 8M363 555l-8 8"/>
            <g fill="#fff" text-anchor="middle" class="font-['Noto_Sans',sans-serif] text-[13px]">
              <text x="348" y="161">6</text><text x="545" y="161">B</text><text x="679" y="161">7</text><text x="1009" y="161">8</text>
              <text x="276" y="232">A</text><text x="276" y="573">A1</text><text x="545" y="573">A</text><text x="1009" y="617">1</text>
            </g>
            <text fill="#fff" text-anchor="middle" transform="translate(914 356) rotate(-90)" class="font-['Noto_Sans',sans-serif] text-[15px]">4200</text>
          </g>
        </svg>
        <div class="absolute right-0 top-0 h-[19px] w-3.5 bg-[#0078f0]"></div>
        <div class="absolute right-0 top-[3px] h-px w-3.5 bg-[#7a3a90]"></div>
      </section>

      <footer class="flex h-3 shrink-0 items-start overflow-hidden whitespace-nowrap pt-[3px] [&_button]:flex [&_button]:h-[23px] [&_button]:shrink-0 [&_button]:items-center [&_button]:border [&_button]:pl-0.5 [&_button]:pr-[3px]">
        <div class="flex shrink-0 bg-white">
          <span class="ml-[3px] mr-[3px] h-4 self-center border-l-2 border-dotted border-[#b5b5b5]"></span>
          <button class="border-transparent"><svg class="mr-1 size-4" viewBox="0 0 16 16"><path d="M0 4.500L5 1v2h10v3H5v2z" fill="#d88a8a"/><path d="M7 6h3v10H7z" fill="#d88a8a"/></svg>正交</button>
          <button class="border-[#2a7fd0] bg-[#d8eaf9]"><svg class="mr-1 size-4" viewBox="0 0 16 16"><path d="M2.500 0v16M13.500 0v16" stroke="#333a80"/></svg>对象捕捉</button>
          <button class="border-[#2a7fd0] bg-[#d8eaf9]"><svg class="mr-1 size-4" viewBox="0 0 16 16"><path d="M1.500 0v16M14.500 0v16M1 3.500h14" stroke="#4a4a70"/><path d="M2 6h12" stroke="#d88a8a"/></svg>动态输入</button>
          <span class="ml-[7px] mr-1 h-4 self-center border-l-2 border-dotted border-[#b5b5b5]"></span>
          <button class="border-transparent"><svg class="mr-1 size-4" viewBox="0 0 16 16"><path d="M1 0l14 14M15 0L1 14" stroke="#2456b8"/></svg>交点</button>
          <button class="border-[#2a7fd0] bg-[#d8eaf9]"><svg class="mr-1 size-4" viewBox="0 0 16 16"><path d="M8.500 0v14M1 14.500h14" stroke="#2456b8"/></svg>垂点</button>
          <button class="border-[#2a7fd0] bg-[#d8eaf9]"><svg class="mr-1 size-4" viewBox="0 0 16 16"><path d="M1 8.500h14" stroke="#2456b8"/></svg>中点</button>
          <button class="border-transparent"><svg class="mr-1 size-4" viewBox="0 0 16 16"><path d="M8 1l6 7-6 6-6-6z" fill="none" stroke="#2456b8"/></svg>顶点</button>
          <button class="border-transparent"><svg class="mr-1 size-4" viewBox="0 0 16 16"><path d="M1 5h2v2H1zM10 1l3 3M13 1l-3 3" stroke="#2456b8"/><circle cx="6" cy="2" r="1.300" fill="none" stroke="#2456b8"/><path d="M2 9v6M11 7v7" stroke="#2456b8" stroke-dasharray="2 1"/></svg>坐标</button>
        </div>
      </footer>
    </main>
  </div>
</div>

<!-- floating script window -->
<div role="dialog" aria-label="Poi..." class="absolute left-[213px] top-[19px] w-[52px] shadow-md">
  <div class="flex h-[25px] items-center justify-between bg-white/95 pl-[3px] text-[13px] text-[#9a9a9a]">Poi...<span class="h-5 w-[18px] bg-[#e9e9e9]"></span></div>
  <button class="h-[23px] w-full border-2 border-b-[#6a6a6a] border-l-[#8a8a8a] border-r-[#6a6a6a] border-t-[#8a8a8a] bg-[#ececec]">开始</button>
</div>
</body>
</html>
